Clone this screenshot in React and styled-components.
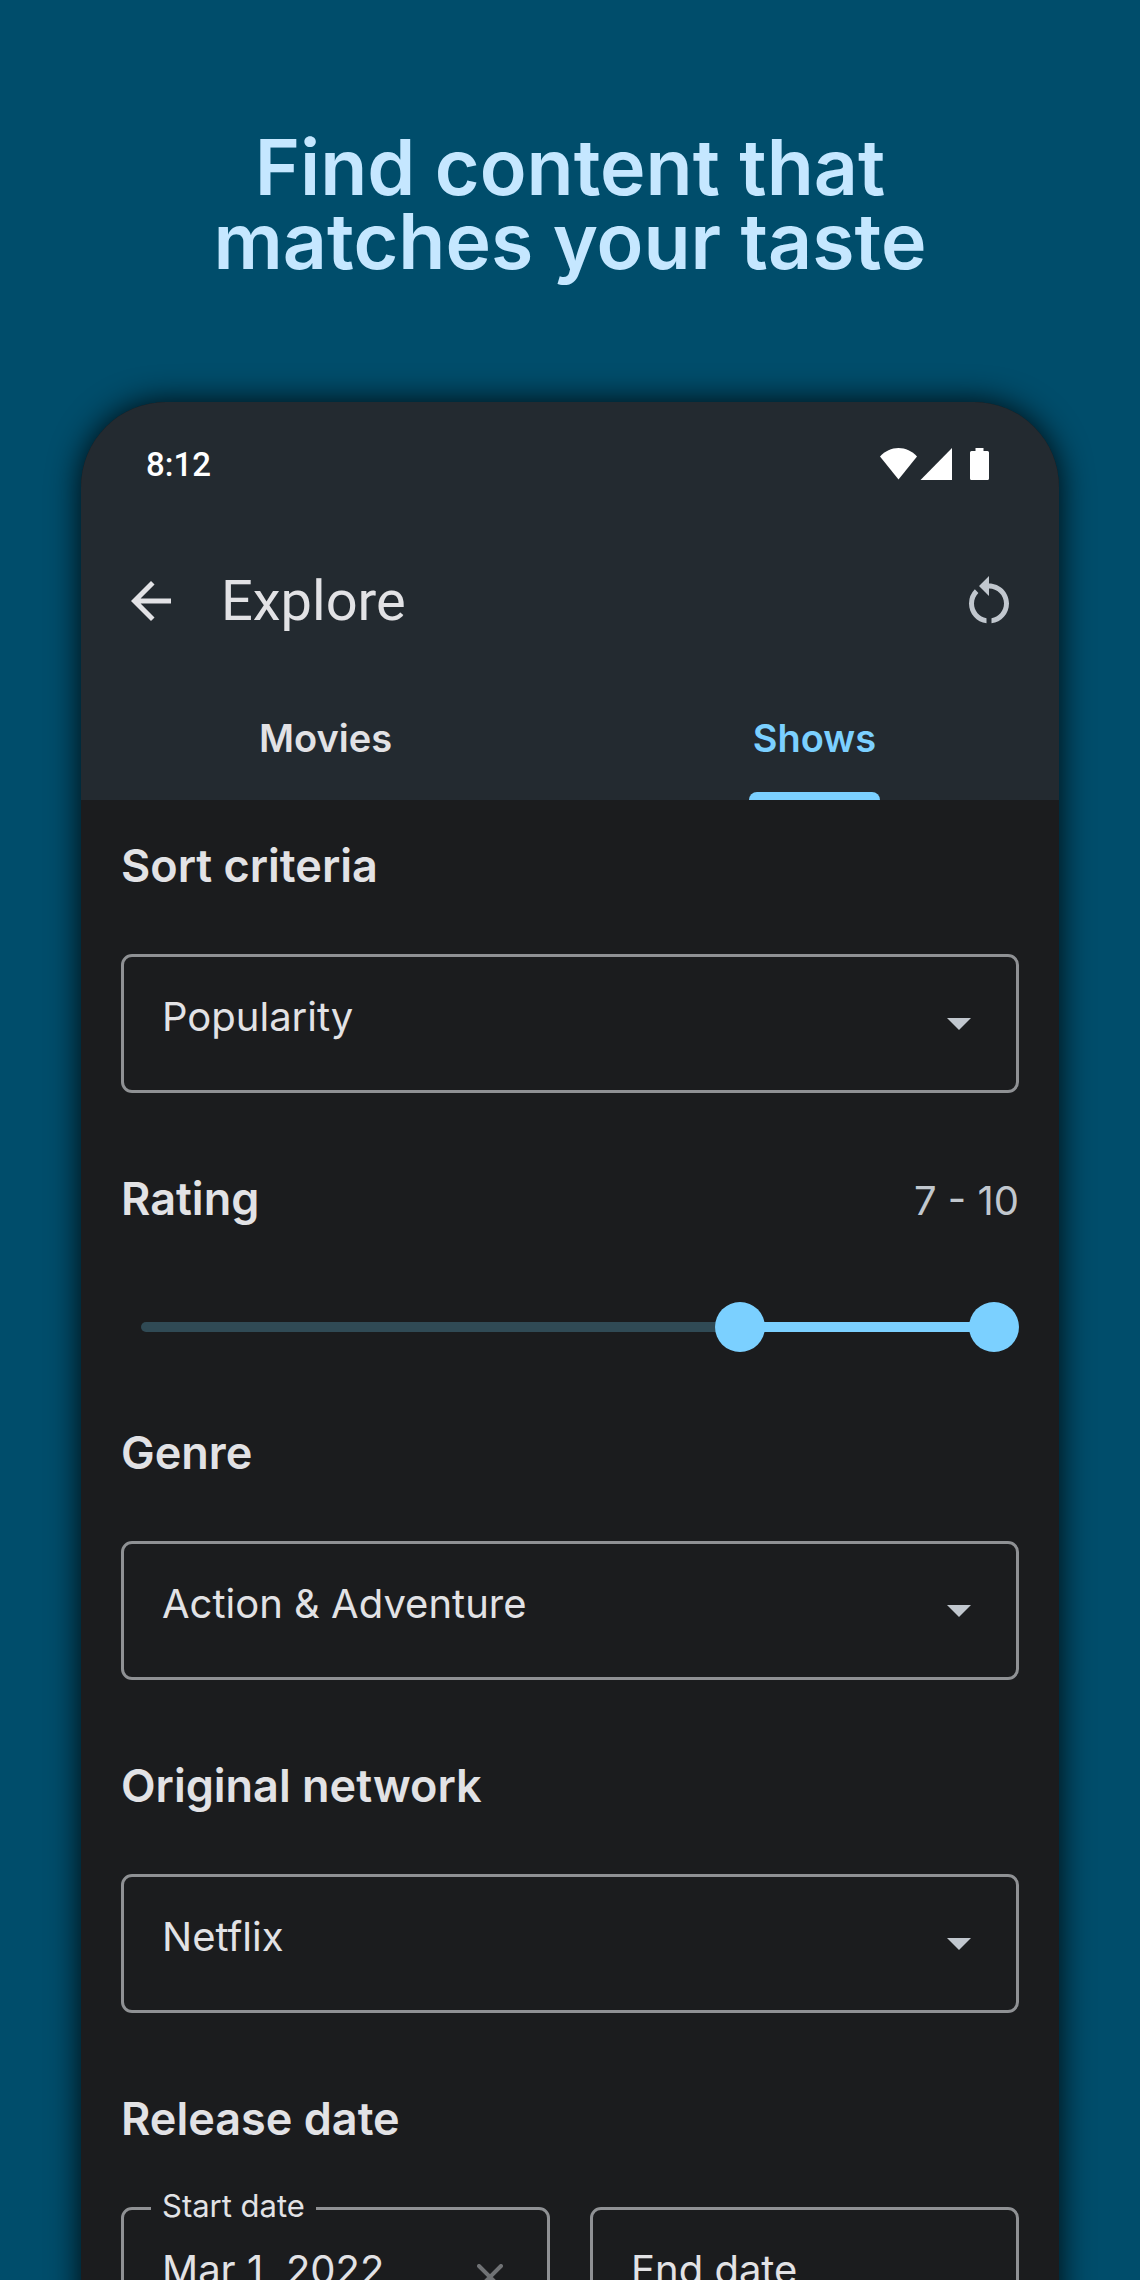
import React, { useState } from "react";
import styled, { createGlobalStyle } from "styled-components";
import { MdArrowBack, MdRestartAlt } from "react-icons/md";

const App = () => {
  const [tab, setTab] = useState("Shows");
  const [range, setRange] = useState([7, 10]);
  const [startDate, setStartDate] = useState("Mar 1, 2022");
  const [endDate, setEndDate] = useState("");
  const [low, high] = range;

  return (
    <Page>
      <GlobalStyle />
      <Headline>Find content that matches your taste</Headline>
      <Phone>
        <Header>
          <StatusBar>
            <span>8:12</span>
            <StatusIcons />
          </StatusBar>
          <Toolbar>
            <IconButton aria-label="Back">
              <MdArrowBack />
            </IconButton>
            <Title>Explore</Title>
            <IconButton aria-label="Reset filters" $muted onClick={() => setRange([0, 10])}>
              <MdRestartAlt />
            </IconButton>
          </Toolbar>
          <Tabs>
            {["Movies", "Shows"].map((name) => (
              <Tab key={name} $active={tab === name} onClick={() => setTab(name)}>
                <TabLabel $active={tab === name}>{name}</TabLabel>
              </Tab>
            ))}
          </Tabs>
        </Header>

        <Filters>
          <SelectSection id="sort" title="Sort criteria" options={["Popularity", "Rating"]} />

          <Section $gap="60px">
            <SectionHead>
              <SectionTitle>Rating</SectionTitle>
              <RangeValue>
                {low} - {high}
              </RangeValue>
            </SectionHead>
            <Slider>
              <Track>
                <TrackFill style={{ marginLeft: `${low * 10}%`, width: `${(high - low) * 10}%` }} />
              </Track>
              <Range
                type="range"
                min="0"
                max="10"
                aria-label="Minimum rating"
                value={low}
                onChange={(e) => setRange([Math.min(+e.target.value, high), high])}
              />
              <Range
                type="range"
                min="0"
                max="10"
                aria-label="Maximum rating"
                value={high}
                onChange={(e) => setRange([low, Math.max(+e.target.value, low)])}
              />
            </Slider>
          </Section>

          <SelectSection id="genre" title="Genre" options={["Action & Adventure", "Comedy"]} />
          <SelectSection id="network" title="Original network" options={["Netflix", "HBO"]} />

          <Section>
            <SectionHead>
              <SectionTitle>Release date</SectionTitle>
            </SectionHead>
            <Dates>
              <Field>
                <FloatingLabel htmlFor="start">Start date</FloatingLabel>
                <DateInput
                  id="start"
                  value={startDate}
                  onChange={(e) => setStartDate(e.target.value)}
                />
                <ClearButton
                  type="button"
                  aria-label="Clear start date"
                  onClick={() => setStartDate("")}
                >
                  <svg width="26" height="26" viewBox="0 0 26 26">
                    <path
                      d="M2 2L24 24M24 2L2 24"
                      stroke="currentColor"
                      strokeWidth="4"
                      strokeLinecap="round"
                    />
                  </svg>
                </ClearButton>
              </Field>
              <Field>
                <DateInput
                  aria-label="End date"
                  placeholder="End date"
                  value={endDate}
                  onChange={(e) => setEndDate(e.target.value)}
                />
              </Field>
            </Dates>
          </Section>
        </Filters>
      </Phone>
    </Page>
  );
};

const SelectSection = ({ id, title, options }) => (
  <Section>
    <SectionHead>
      <SectionTitle>
        <label htmlFor={id}>{title}</label>
      </SectionTitle>
    </SectionHead>
    <Field>
      <Select id={id}>
        {options.map((option) => (
          <option key={option}>{option}</option>
        ))}
      </Select>
      <Caret width="24" height="12" viewBox="0 0 24 12">
        <path d="M0 0H24L12 12Z" fill="currentColor" />
      </Caret>
    </Field>
  </Section>
);

const StatusIcons = () => (
  <svg width="109" height="32" viewBox="0 0 109 32" fill="#fff">
    {/* wifi */}
    <path d="M0 8.5C5 3 11.500 0 18.500 0S32 3 37 8.500L18.500 31.500Z" />
    {/* signal */}
    <path d="M72 0V32H40.500Z" />
    {/* battery */}
    <path d="M95.500 0H103.500V3H107.500Q109 3 109 4.500V30.500Q109 32 107.500 32H91.500Q90 32 90 30.500V4.500Q90 3 91.500 3H95.500Z" />
  </svg>
);

const GlobalStyle = createGlobalStyle`
  * {
    box-sizing: border-box;
  }

  body {
    margin: 0;
    background: #004d6b;
    font-family: Inter, Roboto, sans-serif;
  }

  button, input, select {
    margin: 0;
    font: inherit;
    color: inherit;
  }
`;

const Page = styled.div`
  height: 100vh;
  overflow: hidden;
  padding: 130px 81px 0;
  background: #004d6b;
`;

const Headline = styled.h1`
  max-width: 800px;
  margin: 0 auto 124px;
  color: #c5e7ff;
  font-size: 77px;
  line-height: 74px;
  font-weight: 600;
  text-align: center;
`;

const Phone = styled.main`
  overflow: hidden;
  border-radius: 85px 85px 0 0;
  background: #1b1c1e;
  color: #e2e2e5;
  box-shadow: 0 0 32px rgba(0, 0, 0, .9);
`;

const Header = styled.header`
  background: #232a30;
`;

const StatusBar = styled.div`
  display: flex;
  align-items: center;
  justify-content: space-between;
  height: 124px;
  padding: 0 70px 0 65px;
  color: #fff;
  font-family: Roboto, sans-serif;
  font-size: 33px;
  font-weight: 500;
`;

const Toolbar = styled.div`
  display: flex;
  align-items: center;
  height: 150px;
  padding: 0 40px;
`;

const IconButton = styled.button`
  display: flex;
  padding: 0;
  border: 0;
  background: none;
  color: ${(props) => (props.$muted ? "#c1c7ce" : "#e2e2e5")};
  font-size: 60px;
  cursor: pointer;
`;

const Title = styled.h2`
  flex: 1;
  margin: 0 0 0 40px;
  font-family: Roboto, sans-serif;
  font-size: 56px;
  line-height: 64px;
  font-weight: 400;
`;

const Tabs = styled.nav`
  display: flex;
`;

const Tab = styled.button`
  display: flex;
  flex: 1;
  justify-content: center;
  height: 124px;
  padding: 0;
  border: 0;
  background: none;
  color: ${(props) => (props.$active ? "#7bd0ff" : "#e2e2e5")};
  font-size: 38px;
  font-weight: 600;
  line-height: 124px;
  cursor: pointer;
`;

const TabLabel = styled.span`
  position: relative;
  padding: 0 4px;

  &::after {
    content: "";
    display: ${(props) => (props.$active ? "block" : "none")};
    position: absolute;
    left: 0;
    right: 0;
    bottom: 0;
    height: 8px;
    border-radius: 8px 8px 0 0;
    background: #7bd0ff;
  }
`;

const Filters = styled.form`
  padding: 40px 40px 0;
`;

const Section = styled.section`
  margin-bottom: ${(props) => props.$gap || "80px"};
`;

const SectionHead = styled.div`
  display: flex;
  align-items: baseline;
  justify-content: space-between;
  height: 52px;
  margin-bottom: 62px;
  line-height: 52px;
`;

const SectionTitle = styled.h3`
  margin: 0;
  font-size: 45px;
  font-weight: 600;
`;

const RangeValue = styled.span`
  color: #c1c7ce;
  font-size: 40px;
`;

const Field = styled.div`
  display: flex;
  flex: 1;
  align-items: center;
  position: relative;
  min-width: 0;
  height: 139px;
  border: 3px solid #8f9194;
  border-radius: 11px;
`;

const Select = styled.select`
  appearance: none;
  width: 100%;
  height: 100%;
  padding: 0 80px 14px 38px;
  border: 0;
  outline: 0;
  background: none;
  font-size: 40px;
`;

const Caret = styled.svg`
  position: absolute;
  right: 45px;
  color: #c1c7ce;
  pointer-events: none;
`;

const Slider = styled.div`
  display: grid;
  align-items: center;
  height: 80px;

  > * {
    grid-area: 1 / 1;
  }
`;

const Track = styled.div`
  height: 10px;
  margin: 0 20px;
  padding: 0 5px;
  border-radius: 5px;
  background: #304a55;
`;

const TrackFill = styled.div`
  height: 100%;
  background: #7bd0ff;
`;

const Range = styled.input`
  appearance: none;
  width: 100%;
  height: 50px;
  background: none;
  pointer-events: none;

  &::-webkit-slider-thumb {
    appearance: none;
    width: 50px;
    height: 50px;
    border-radius: 50%;
    background: #7bd0ff;
    pointer-events: auto;
  }
`;

const Dates = styled.div`
  display: flex;
  gap: 40px;
`;

const FloatingLabel = styled.label`
  position: absolute;
  top: -22px;
  left: 27px;
  padding: 0 11px;
  background: #1b1c1e;
  font-size: 31px;
  line-height: 36px;
`;

const DateInput = styled.input`
  flex: 1;
  min-width: 0;
  height: 100%;
  padding: 0 0 14px 38px;
  border: 0;
  outline: 0;
  background: none;
  font-size: 40px;

  &::placeholder {
    color: #e2e2e5;
    opacity: 1;
  }
`;

const ClearButton = styled.button`
  display: flex;
  padding: 0 44px 0 20px;
  border: 0;
  background: none;
  color: #707275;
  cursor: pointer;
`;

export default App;
